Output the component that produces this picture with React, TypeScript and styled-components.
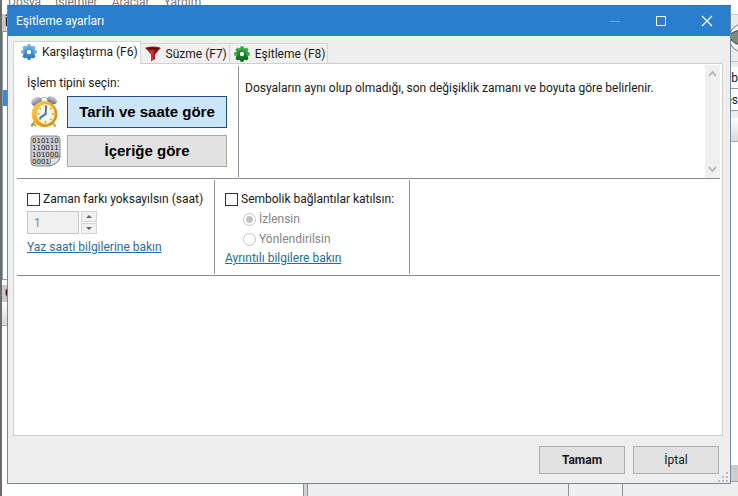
import React from "react";
import styled, { createGlobalStyle, css } from "styled-components";

const Global = createGlobalStyle`
  *, *::before, *::after { box-sizing: border-box; }
  html, body, #root { height: 100%; margin: 0; }
  body { font: 12px/16px Roboto, "Open Sans", sans-serif; color: #1a1a1a; background: #fff; overflow: hidden; }
  button, input { font: inherit; color: inherit; margin: 0; padding: 0; }
`;

/* ---------- main window behind the dialog ---------- */

const Screen = styled.div`
  position: relative;
  height: 100vh;
  min-height: 300px;
  overflow: hidden;
`;

const Backdrop = styled.div`
  display: flex;
  flex-direction: column;
  height: 100%;
  border-left: 2px solid #6b6b68;
  background: #fff;
`;

const MenuBar = styled.nav`
  display: flex;
  flex: none;
  gap: 14px;
  height: 14px;
  padding-left: 6px;
  line-height: 4px;
  color: #777;
`;

const Panes = styled.div`
  display: flex;
  flex: 1;
  min-height: 0;
`;

const SidePane = styled.div`
  display: flex;
  flex-direction: column;
  width: 301px;
  flex: none;
  overflow: hidden;
`;

const Caption = styled.div`
  flex: none;
  height: 17px;
  padding-left: 3px;
  background: #c9c9c9;
  font-weight: 700;
`;

const PaneList = styled.div`
  flex: none;
  height: 249px;
  margin-bottom: 5px;
  padding-top: 58px;
  border: 1px solid #8a9aa8;
  background: #fff;
`;

const SelectedRow = styled.div`
  height: 16px;
  background: #3b8ad8;
`;

const ListHeader = styled.div`
  flex: none;
  height: 24px;
  border-bottom: 1px solid #aaa;
  background: linear-gradient(#fff, #d8d8d8);
`;

const Splitter = styled.div`
  flex: none;
  width: 5px;
  border: 1px solid #8c9298;
  border-width: 0 1px;
  background: #d2d2d2;
`;

const MainPane = styled.div`
  display: flex;
  flex: 1;
  flex-direction: column;
  min-width: 0;
`;

const Toolbar = styled.div`
  display: flex;
  flex: none;
  align-items: center;
  justify-content: flex-end;
  height: 48px;
  border-top: 1px solid #c8c8c8;
  border-bottom: 1px solid #c0c0c0;
  background: #ececec;
`;

const Fields = styled.div`
  flex: none;
  padding: 5px 0 7px;
  background: #ececec;
`;

const Field = styled.div`
  height: 22px;
  padding-top: 3px;
  border-bottom: 1px solid #9a9a9a;
  background: #fff;
  text-align: right;
  white-space: nowrap;
`;

const MainList = styled.div`
  flex: 1;
  background: #fff;
`;

const ScrollTrack = styled.div`
  flex: none;
  height: 17px;
  background: #cdcdcd;
  border-bottom: 1px solid #9aa0a6;
`;

const StatusBar = styled.div`
  display: flex;
  flex: none;
  justify-content: flex-end;
  height: 14px;
  background: #eee;
`;

const StatusCell = styled.div<{ $width: number }>`
  width: ${(p) => p.$width}px;
  border-left: 1px solid #8c9298;
`;

/* ---------- dialog frame ---------- */

const Dialog = styled.section`
  position: absolute;
  inset: 5px 7px 12px 7px;
  display: flex;
  flex-direction: column;
  border: 1px solid #6f8c9e;
  border-top-color: #2a72b5;
  background: #eee;
`;

const TitleBar = styled.header`
  display: flex;
  flex: none;
  height: 30px;
  padding-left: 8px;
  background: #2a7ecb;
  color: #fff;
`;

const Title = styled.h1`
  flex: 1;
  margin: 0;
  font-size: 12px;
  font-weight: 400;
  line-height: 30px;
`;

const WindowButton = styled.button`
  display: grid;
  place-items: center;
  width: 46px;
  border: 0;
  background: none;

  &:disabled { opacity: 0.35; }
`;

const Body = styled.div`
  display: flex;
  flex: 1;
  flex-direction: column;
  min-height: 0;
  padding: 5px 7px 0 5px;
`;

const Tabs = styled.div`
  display: flex;
  flex: none;
  align-items: flex-end;
  height: 22px;
`;

const Tab = styled.button<{ $active?: boolean }>`
  display: flex;
  align-items: center;
  gap: 5px;
  height: 20px;
  padding: 0 2px 0 4px;
  border: 1px solid #d6d6d6;
  border-left-width: 0;
  border-bottom: 0;
  background: #f0f0f0;
  white-space: nowrap;

  ${(p) =>
    p.$active &&
    css`
      position: relative;
      height: 23px;
      margin-bottom: -1px;
      padding: 0 2px 3px 7px;
      border-left-width: 1px;
      background: #fff;
    `}
`;

const Page = styled.main`
  flex: 1;
  min-height: 0;
  padding: 1px 2px 0 3px;
  border: 1px solid #d0d0d0;
  background: #fff;
`;

const Band = styled.div<{ $height: number }>`
  display: flex;
  min-height: ${(p) => p.$height}px;
  padding: 1px 0;
  border-bottom: 1px solid #8c8c8c;
`;

const Cell = styled.div<{ $width: number }>`
  flex: none;
  width: ${(p) => p.$width}px;
  padding: 9px 10px 0;
  border-right: 1px solid #8f959c;
  white-space: nowrap;
`;

/* ---------- comparison type ---------- */

const Choice = styled.div`
  display: flex;
  gap: 6px;
  margin-bottom: 7px;

  svg { flex: none; }
`;

const GroupLabel = styled.div`
  margin-bottom: 5px;
`;

const TypeButton = styled.button<{ $active?: boolean }>`
  flex: none;
  width: 160px;
  height: 32px;
  border: 1px solid ${(p) => (p.$active ? "#1f4f84" : "#a8a8a8")};
  background: ${(p) => (p.$active ? "#cce5f9" : "#e2e2e2")};
  color: #000;
  font: 700 15px/18px "Liberation Sans", Arial, sans-serif;
`;

const Description = styled.p`
  flex: 1;
  margin: 0;
  padding: 14px 6px;
`;

const ScrollBar = styled.div`
  display: flex;
  flex: none;
  flex-direction: column;
  justify-content: space-between;
  width: 15px;
  margin: -1px 0;
  background: #f0f0f0;
`;

const ScrollButton = styled.button`
  display: grid;
  place-items: center;
  height: 17px;
  border: 0;
  background: none;
`;

/* ---------- options ---------- */

const Check = styled.label`
  display: flex;
  align-items: center;
  gap: 3px;
  height: 20px;
`;

const CheckBox = styled.input`
  appearance: none;
  flex: none;
  width: 13px;
  height: 13px;
  border: 1px solid #333;
  background: #fff;
`;

const RadioLabel = styled(Check)`
  margin-left: 18px;
  color: #858585;
`;

const Radio = styled.input`
  appearance: none;
  flex: none;
  width: 13px;
  height: 13px;
  border: 1px solid #c4c4c4;
  border-radius: 50%;
  background: #fff;

  &:checked { background: radial-gradient(circle, #c0c0c0 0 3px, #fff 4px); }
`;

const Spinner = styled.div`
  display: flex;
  gap: 2px;
  align-items: center;
  margin: 2px 0 5px;
`;

const NumberBox = styled.input`
  appearance: textfield;
  width: 52px;
  height: 23px;
  padding-left: 6px;
  border: 1px solid #c6c6c6;
  background: #f0f0f0;
  color: #858585;

  &::-webkit-inner-spin-button { appearance: none; }
`;

const Arrows = styled.div`
  display: grid;
  gap: 1px;
`;

const ArrowButton = styled.button`
  display: grid;
  place-items: center;
  width: 16px;
  height: 11px;
  border: 1px solid #d4d4d4;
  background: #f0f0f0;
`;

const Link = styled.a`
  display: block;
  margin-top: 1px;
  color: #1f6f9c;
  text-decoration: underline;
`;

const Footer = styled.footer`
  display: flex;
  flex: none;
  justify-content: flex-end;
  gap: 8px;
  padding: 10px 4px 9px;
`;

const FooterButton = styled.button<{ $primary?: boolean }>`
  width: 86px;
  height: 28px;
  border: 1px solid #a9adad;
  background: #e1e1e1;
  font-weight: ${(p) => (p.$primary ? 700 : 400)};
`;

const Grip = styled.svg`
  position: absolute;
  right: 2px;
  bottom: 1px;
`;

/* ---------- drawings ---------- */

function Gear({ from, to, hole }: { from: string; to: string; hole: string }) {
  const id = "gear" + from.slice(1);
  return (
    <svg width="16" height="16" viewBox="0 0 16 16" aria-hidden="true">
      <defs>
        <linearGradient id={id} x1="0" y1="0" x2="0" y2="1">
          <stop offset="0" stopColor={from} />
          <stop offset="1" stopColor={to} />
        </linearGradient>
      </defs>
      <g fill={`url(#${id})`}>
        <circle cx="8" cy="8" r="6.3" />
        {[0, 45, 90, 135, 180, 225, 270, 315].map((a) => (
          <path key={a} d="M5.8 3 L6.5 0.2 H9.5 L10.2 3 Z" fill={a > 90 && a < 270 ? to : from} transform={`rotate(${a} 8 8)`} />
        ))}
      </g>
      <circle cx="8" cy="8" r="3.2" fill={to} opacity="0.6" />
      <circle cx="8" cy="8" r="2.2" fill={hole} />
    </svg>
  );
}

function Funnel() {
  return (
    <svg width="16" height="16" viewBox="0 0 16 16" aria-hidden="true">
      <defs>
        <linearGradient id="funnel" x1="0" x2="1">
          <stop offset="0" stopColor="#7d0d10" />
          <stop offset="0.45" stopColor="#d8383a" />
          <stop offset="0.6" stopColor="#9a1416" />
          <stop offset="1" stopColor="#5a0709" />
        </linearGradient>
      </defs>
      <path d="M0.5 2 L6 8.5 V15.5 L10 13 V8.5 L15.5 2 Z" fill="url(#funnel)" />
      <ellipse cx="8" cy="2.3" rx="7.6" ry="1.9" fill="#a81c1f" />
      <ellipse cx="8" cy="2.5" rx="5.8" ry="1" fill="#5c0a0c" />
    </svg>
  );
}

function Clock() {
  return (
    <svg width="34" height="32" viewBox="0 0 34 32" aria-hidden="true">
      <defs>
        <linearGradient id="rim" x1="0" y1="0" x2="1" y2="1">
          <stop offset="0" stopColor="#ffd75a" />
          <stop offset="0.5" stopColor="#f7a51c" />
          <stop offset="1" stopColor="#d97706" />
        </linearGradient>
        <linearGradient id="bell" x1="0" y1="0" x2="0" y2="1">
          <stop offset="0" stopColor="#d4d7dc" />
          <stop offset="1" stopColor="#5d636e" />
        </linearGradient>
        <radialGradient id="face">
          <stop offset="0" stopColor="#fff" />
          <stop offset="1" stopColor="#f6f0c4" />
        </radialGradient>
      </defs>
      <path d="M7 26 L5 30 M25 26 L28 30" stroke="#c9b25c" strokeWidth="2.2" strokeLinecap="round" />
      <path d="M12 5 Q17 -2 21 4" fill="none" stroke="#b9bcc2" strokeWidth="1.2" />
      <ellipse cx="9.5" cy="5.5" rx="5.6" ry="4.2" transform="rotate(-30 9.5 5.5)" fill="url(#bell)" />
      <ellipse cx="25" cy="4.2" rx="5.2" ry="3.7" transform="rotate(25 25 4.2)" fill="url(#bell)" />
      <ellipse cx="17.5" cy="18" rx="12.8" ry="13" fill="url(#rim)" />
      <ellipse cx="18.5" cy="18" rx="9.6" ry="10.4" fill="url(#face)" stroke="#e0940f" strokeWidth="0.6" />
      <path
        d="M18.5 9v2M18.5 25v2M10.5 18h2M24.8 18h2M12.5 12l1.2 1.2M24.5 12l-1.2 1.2M12.5 24l1.2-1.2M24.5 24l-1.2-1.2"
        stroke="#87b04a"
        strokeWidth="1.3"
      />
      <path d="M18.5 18 L19.2 10.5 M18.5 18 L13 22" stroke="#2865a8" strokeWidth="1.6" strokeLinecap="round" />
      <circle cx="18.5" cy="18" r="1.4" fill="#4a86c8" />
      <path d="M4 29 q3 -2 5 1" stroke="#76a838" strokeWidth="1.4" fill="none" />
    </svg>
  );
}

function Binary() {
  return (
    <svg width="34" height="32" viewBox="0 0 34 32" aria-hidden="true">
      <path d="M6 1 H30 Q33 1 33 5 V22 Q32 29 22 31 H8 Q4 31 4 27 V4 Q4 1 6 1 Z" fill="#cdcdcd" stroke="#8b8b8b" />
      <path d="M22 31 Q25 27 23 23 Q29 24 33 21 Q32 29 22 31 Z" fill="#e4e4e4" stroke="#8b8b8b" />
      <g fill="#222" fontFamily="DejaVu Sans, sans-serif" fontSize="7">
        <text x="5" y="8">010110</text>
        <text x="5" y="15">110011</text>
        <text x="5" y="22">101000</text>
        <text x="5" y="29">0001</text>
      </g>
    </svg>
  );
}

function Triangle({ down }: { down?: boolean }) {
  return (
    <svg width="6" height="3" viewBox="0 0 6 3" aria-hidden="true">
      <path d={down ? "M0 0H6L3 3Z" : "M0 3H6L3 0Z"} fill="#666" />
    </svg>
  );
}

function Chevron({ down }: { down?: boolean }) {
  return (
    <svg width="9" height="7" viewBox="0 0 9 7" aria-hidden="true">
      <path d={down ? "M1 1L4.5 5L8 1" : "M1 6L4.5 2L8 6"} fill="none" stroke="#b4b4b4" strokeWidth="1.8" />
    </svg>
  );
}

const gripDots = [[8, 0], [4, 4], [8, 4], [0, 8], [4, 8], [8, 8]];

export default function App() {
  return (
    <Screen>
      <Global />
      <Backdrop>
        <MenuBar>
          <span>Dosya</span>
          <span>İşlemler</span>
          <span>Araçlar</span>
          <span>Yardım</span>
        </MenuBar>
        <Panes>
          <SidePane>
            <Caption>İ</Caption>
            <PaneList>
              <SelectedRow />
            </PaneList>
            <Caption>G</Caption>
            <ListHeader />
          </SidePane>
          <Splitter />
          <MainPane>
            <Toolbar>
              <svg width="20" height="30" viewBox="0 0 20 30" aria-hidden="true">
                <circle cx="25" cy="15" r="14" fill="#f2f2f2" stroke="#777" />
                <path d="M12 11 Q18 7 25 7 V22 Q16 22 12 15 Z" fill="#7e8a7e" stroke="#444" />
              </svg>
            </Toolbar>
            <Fields>
              <Field>b</Field>
              <Field>es</Field>
            </Fields>
            <ListHeader />
            <MainList />
            <ScrollTrack />
            <StatusBar>
              <StatusCell $width={54} />
              <StatusCell $width={116} />
            </StatusBar>
          </MainPane>
        </Panes>
      </Backdrop>

      <Dialog role="dialog" aria-labelledby="dialog-title">
        <TitleBar>
          <Title id="dialog-title">Eşitleme ayarları</Title>
          <WindowButton aria-label="Simge durumuna küçült" disabled>
            <svg width="12" height="12"><path d="M1 6.5H11" stroke="#fff" /></svg>
          </WindowButton>
          <WindowButton aria-label="Ekranı kapla">
            <svg width="12" height="12"><path d="M1.5 1.5H10.5V10.5H1.5Z" stroke="#fff" fill="none" /></svg>
          </WindowButton>
          <WindowButton aria-label="Kapat">
            <svg width="12" height="12"><path d="M1 1L11 11M11 1L1 11" stroke="#fff" strokeWidth="1.2" /></svg>
          </WindowButton>
        </TitleBar>

        <Body>
          <Tabs role="tablist">
            <Tab role="tab" aria-selected="true" $active>
              <Gear from="#6fb0e6" to="#2f7cc6" hole="#fff" />
              Karşılaştırma (F6)
            </Tab>
            <Tab role="tab" aria-selected="false">
              <Funnel />
              Süzme (F7)
            </Tab>
            <Tab role="tab" aria-selected="false">
              <Gear from="#3fae4a" to="#0d6b1d" hole="#fff" />
              Eşitleme (F8)
            </Tab>
          </Tabs>

          <Page role="tabpanel">
            <Band $height={114}>
              <Cell $width={222}>
                <GroupLabel>İşlem tipini seçin:</GroupLabel>
                <Choice>
                  <Clock />
                  <TypeButton $active>Tarih ve saate göre</TypeButton>
                </Choice>
                <Choice>
                  <Binary />
                  <TypeButton>İçeriğe göre</TypeButton>
                </Choice>
              </Cell>
              <Description>
                Dosyaların aynı olup olmadığı, son değişiklik zamanı ve boyuta göre belirlenir.
              </Description>
              <ScrollBar>
                <ScrollButton aria-label="Yukarı"><Chevron /></ScrollButton>
                <ScrollButton aria-label="Aşağı"><Chevron down /></ScrollButton>
              </ScrollBar>
            </Band>

            <Band $height={97}>
              <Cell $width={198}>
                <Check>
                  <CheckBox type="checkbox" />
                  Zaman farkı yoksayılsın (saat)
                </Check>
                <Spinner>
                  <NumberBox type="number" defaultValue={1} disabled aria-label="Saat" />
                  <Arrows>
                    <ArrowButton disabled aria-label="Artır"><Triangle /></ArrowButton>
                    <ArrowButton disabled aria-label="Azalt"><Triangle down /></ArrowButton>
                  </Arrows>
                </Spinner>
                <Link href="#saat">Yaz saati bilgilerine bakın</Link>
              </Cell>
              <Cell $width={195}>
                <Check>
                  <CheckBox type="checkbox" />
                  Sembolik bağlantılar katılsın:
                </Check>
                <RadioLabel>
                  <Radio type="radio" name="symlink" defaultChecked disabled />
                  İzlensin
                </RadioLabel>
                <RadioLabel>
                  <Radio type="radio" name="symlink" disabled />
                  Yönlendirilsin
                </RadioLabel>
                <Link href="#bilgi">Ayrıntılı bilgilere bakın</Link>
              </Cell>
            </Band>
          </Page>

          <Footer>
            <FooterButton $primary>Tamam</FooterButton>
            <FooterButton>İptal</FooterButton>
          </Footer>
        </Body>
        <Grip width="10" height="10" aria-hidden="true">
          {gripDots.map(([x, y]) => (
            <rect key={`${x}-${y}`} x={x} y={y} width="2" height="2" fill="#bcbcbc" />
          ))}
        </Grip>
      </Dialog>
    </Screen>
  );
}
